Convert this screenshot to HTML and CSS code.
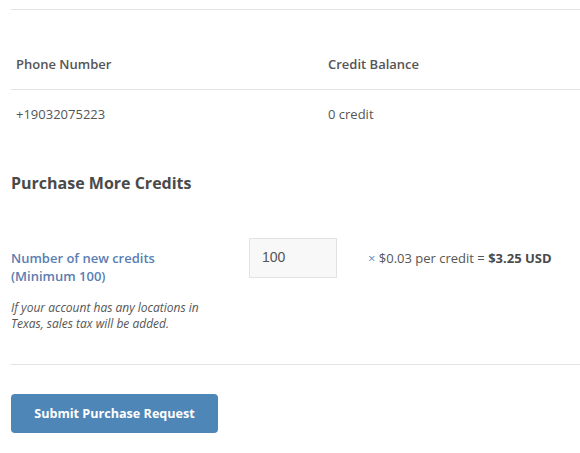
FILE: index.html
```html
<!DOCTYPE html>
<html>
<head>
    <meta charset="UTF-8">
    <title>Credits</title>
    <link rel="stylesheet" href="styles.css">
</head>
<body>
    <div class="page">
        <div class="rule top-rule"></div>

        <table class="numbers">
            <thead>
                <tr>
                    <th class="col-phone">Phone Number</th>
                    <th>Credit Balance</th>
                </tr>
            </thead>
            <tbody>
                <tr>
                    <td>+19032075223</td>
                    <td>0 credit</td>
                </tr>
            </tbody>
        </table>

        <h2 class="section-title">Purchase More Credits</h2>

        <div class="purchase-row">
            <div class="purchase-label">
                <label for="credits">Number of new credits<br>(Minimum 100)</label>
                <p class="note">If your account has any locations in Texas, sales tax will be added.</p>
            </div>
            <input id="credits" class="credits-input" type="text" value="100">
            <div class="price">
                <span class="times">&times;</span> $0.03 per credit = <strong>$3.25 USD</strong>
            </div>
        </div>

        <div class="rule bottom-rule"></div>

        <button class="submit">Submit Purchase Request</button>
    </div>
</body>
</html>
```

FILE: styles.css
```css
body {
    margin: 0;
    padding: 0;
    font-family: "Open Sans", "Noto Sans", sans-serif;
    font-size: 13px;
    color: #555;
    background-color: #fff;
    overflow: hidden;
}
.page {
    padding-left: 11px;
}
.rule {
    border-top: 1px solid #e3e3e3;
}
.top-rule {
    margin-top: 9px;
}
.numbers {
    width: 100%;
    margin-top: 37px;
    border-collapse: collapse;
}
.numbers th,
.numbers td {
    text-align: left;
    padding: 8px 5px;
    line-height: 18px;
}
.numbers th {
    padding-bottom: 16px;
    font-weight: 600;
    color: #555;
    border-bottom: 1px solid #e3e3e3;
}
.numbers td {
    padding-top: 15px;
    padding-bottom: 15px;
}
.col-phone {
    width: 302px;
}
.section-title {
    margin: 34px 0 0;
    font-size: 16px;
    line-height: 22px;
    font-weight: 700;
    color: #4a4a4a;
}
.purchase-row {
    display: flex;
    align-items: flex-start;
    margin-top: 44px;
}
.purchase-label {
    width: 238px;
    padding-top: 11px;
}
.purchase-label label {
    display: block;
    font-weight: 600;
    color: #5a7db3;
    line-height: 18px;
}
.note {
    margin: 15px 0 0;
    width: 212px;
    font-size: 12px;
    font-style: italic;
    line-height: 16px;
    color: #555;
}
.credits-input {
    box-sizing: border-box;
    width: 88px;
    height: 40px;
    padding: 0 12px 2px;
    margin: 0;
    font-family: "Liberation Sans", Arial, sans-serif;
    font-size: 14px;
    color: #555;
    background-color: #f8f8f8;
    border: 1px solid #e2e2e2;
    border-radius: 0;
}
.price {
    margin-left: 31px;
    padding-top: 11px;
    line-height: 18px;
}
.times {
    color: #6b8fc0;
}
.price strong {
    font-weight: 700;
    color: #4a4a4a;
}
.bottom-rule {
    margin-top: 32px;
}
.submit {
    display: block;
    margin-top: 29px;
    width: 207px;
    height: 39px;
    padding: 0;
    font-family: "Open Sans", "Noto Sans", sans-serif;
    font-size: 12.6px;
    font-weight: 700;
    color: #fff;
    background-color: #4e86b8;
    border: none;
    border-radius: 4px;
    cursor: pointer;
}
```
